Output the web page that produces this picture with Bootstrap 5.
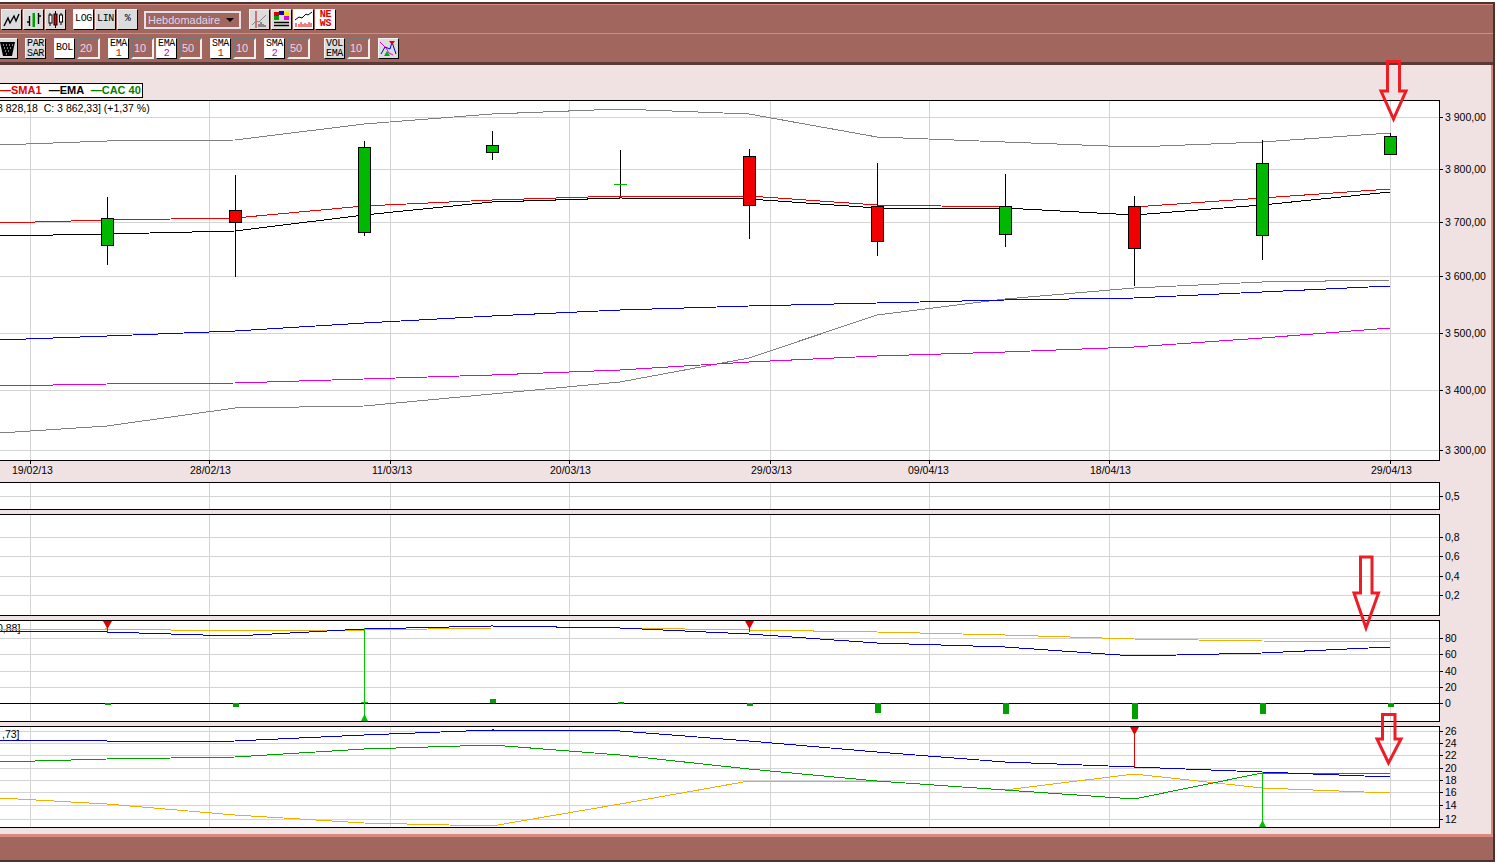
<!DOCTYPE html>
<html lang="fr">
<head>
    <meta charset="UTF-8">
    <title>Graphique CAC 40</title>
    <link href="https://cdn.jsdelivr.net/npm/bootstrap@5.3.0/dist/css/bootstrap.min.css" rel="stylesheet">
    <style>
        html, body { height: 863px; overflow: hidden; background: #fff; }
        body { font-family: "Liberation Sans", Arial, sans-serif; font-size: 11px; color: #000; }
        .app-frame { width: 1495px; height: 860px; margin-top: 2px; background: #a1665e; border: solid #4a3431; border-width: 2px 2px 2px 0; overflow: hidden; }
        .tool-row { flex: none; height: 30px; padding-top: 5px; border-top: 1px solid #d98a7e; border-bottom: 1px solid #d98a7e; }
        .tool-row2 { flex: none; height: 31px; padding-top: 4px; border-bottom: 3px solid #5a3a36; }
        .tb-btn { flex: none; width: 21px; height: 21px; background: #dcdcdc; border: 1px solid; border-color: #f4f4f4 #000 #000 #f4f4f4; font-family: "Liberation Mono", monospace; font-size: 10px; letter-spacing: -.3px; line-height: 10px; text-align: center; padding: 0; overflow: hidden; }
        .tool-row .tb-btn { margin-top: -1px; }
        .tb-btn.on { background: #fff; }
        .tb-btn svg { display: block; width: 19px; height: 19px; }
        .tb-wide { padding-top: 4px; }
        .tb-two { line-height: 9.5px; }
        .num1 { color: #e00000; display: block; }
        .num2 { color: #c000c0; display: block; }
        .red-news { color: #e00000; font-weight: bold; line-height: 9px; }
        .tb-num { flex: none; width: 23px; height: 21px; border: 2px solid; border-color: #777 #eee #eee #777; color: #e8d8e8; font-size: 11px; line-height: 17px; padding-left: 1px; }
        .tb-sel { flex: none; width: 97px; height: 18px; margin-top: 1px; background: #a1665e; border: 2px solid #e8e0e8; color: #d8d8f0; font-size: 11px; line-height: 14px; padding-left: 2px; }
        .tb-sel b { flex: none; width: 19px; height: 14px; margin-left: auto; }
        .tb-sel i { display: block; width: 0; height: 0; margin: 5px auto 0; border: solid transparent; border-width: 4px 4px 0; border-top-color: #000; }
        .gap8 { margin-left: 8px; }
        .gap7 { margin-left: 7px; }
        .gap6 { margin-left: 6px; }
        .gap2 { margin-left: 2px; }
        .gap1 { margin-left: 1px; }
        .gap14 { margin-left: 14px; }
        .shift-l { margin-left: -3px; }
        .chart-area { position: relative; flex: none; width: 1493px; height: 772px; background: #f0e2e3; border-right: 2px solid #d98a7e; border-bottom: 3px solid #d98a7e; }
        .legend-box { width: 144px; height: 15px; margin: 18px 0 2px -1px; background: #fff; border: 1px solid #000; font-weight: bold; font-size: 11px; line-height: 13px; white-space: nowrap; }
        .leg-r { color: #e00000; }
        .leg-k { color: #000; }
        .leg-g { color: #008000; }
        .pane { display: block; overflow: hidden; }
        .pane text { font-family: "Liberation Sans", Arial, sans-serif; font-size: 10.5px; fill: #000; }
        .plot { fill: #fff; stroke: #000; stroke-width: 1; shape-rendering: crispEdges; }
        .grid { stroke: #d4d4d4; fill: none; shape-rendering: crispEdges; }
        .tick { stroke: #000; fill: none; shape-rendering: crispEdges; }
        .ln { fill: none; stroke-width: 1; shape-rendering: crispEdges; }
        .wick { stroke: #000; shape-rendering: crispEdges; }
        .doji { stroke: #00b800; shape-rendering: crispEdges; }
        .up { fill: #00b800; stroke: #000; shape-rendering: crispEdges; }
        .dn { fill: #f00000; stroke: #000; shape-rendering: crispEdges; }
        .bar-g { fill: #00a000; shape-rendering: crispEdges; }
        .arrows { position: absolute; left: 0; top: -65px; width: 1491px; height: 863px; pointer-events: none; }
        .arrows polygon { fill: none; stroke: #ee1c25; stroke-width: 3; stroke-linejoin: miter; }
    </style>
</head>
<body>
<div class="app-frame d-flex flex-column">
    <div class="tool-row d-flex">
        <div class="tb-btn gap1"><svg viewBox="0 0 19 19"><path d="M2 16L6 8 8 13 12 6 14 11 17 4" fill="none" stroke="#000" stroke-width="1.400"/></svg></div>
        <div class="tb-btn gap1"><svg viewBox="0 0 19 19"><path d="M5.500 6V16M3 12H5.500M14.500 3V14M14.500 6H17" fill="none" stroke="#000" stroke-width="1.400"/><path d="M8.500 3H11V17H8.500z" fill="#00a000"/></svg></div>
        <div class="tb-btn gap1"><svg viewBox="0 0 19 19"><path d="M4 3V16M9.500 1V18M15 3V15" stroke="#000"/><rect x="3" y="5" width="3" height="8" fill="#fff" stroke="#000"/><rect x="8" y="4" width="3" height="11" fill="#e00000" stroke="#000"/><rect x="13.500" y="5" width="3" height="7" fill="#fff" stroke="#000"/></svg></div>
        <div class="tb-btn on tb-wide gap7">LOG</div>
        <div class="tb-btn tb-wide gap1">LIN</div>
        <div class="tb-btn tb-wide gap1">%</div>
        <div class="tb-sel gap6 d-flex"><span>Hebdomadaire</span><b><i></i></b></div>
        <div class="tb-btn gap8"><svg viewBox="0 0 19 19"><path d="M6 1V18" stroke="#d00000"/><path d="M2 15L6 11 9 12 16 5" fill="none" stroke="#888"/><path d="M9 17V14M11 17V12M13 17V14M15 17V15" stroke="#333"/></svg></div>
        <div class="tb-btn gap1"><svg viewBox="0 0 19 19"><rect x="2" y="2" width="5" height="4" fill="#d00000"/><rect x="7" y="1" width="5" height="4" fill="#0000e0"/><rect x="12" y="2" width="5" height="4" fill="#e8e800"/><rect x="2" y="6" width="5" height="4" fill="#00a000"/><rect x="12" y="6" width="5" height="4" fill="#e000e0"/><path d="M2 12.500H17M2 15.500H17" stroke="#000" stroke-width="1.500"/></svg></div>
        <div class="tb-btn on gap1"><svg viewBox="0 0 19 19"><path d="M1 10L5 7 8 8 12 4 14 5 18 2" fill="none" stroke="#000"/><path d="M2 17V13M5 17V14M7 17V12M9 17V14M11 17V13M13 17V14M15 17V12M17 17V13" stroke="#e00000"/></svg></div>
        <div class="tb-btn on red-news gap1">NE<br>WS</div>
    </div>
    <div class="tool-row2 d-flex">
        <div class="tb-btn shift-l"><svg viewBox="0 0 19 19"><path d="M2 3H17L14 17H5z" fill="#000"/><path d="M5 6H6M8 6H9M11 6H12M14 6H15M6 9H7M9 9H10M12 9H13M7 12H8M10 12H11M8 15H9" stroke="#fff"/></svg></div>
        <div class="tb-btn tb-two gap7">PAR<br>SAR</div>
        <div class="tb-btn on tb-wide gap8">BOL</div>
        <div class="tb-num gap2">20</div>
        <div class="tb-btn on tb-two gap8">EMA<span class="num1">1</span></div>
        <div class="tb-num gap2">10</div>
        <div class="tb-btn on tb-two gap2">EMA<span class="num2">2</span></div>
        <div class="tb-num gap2">50</div>
        <div class="tb-btn on tb-two gap8">SMA<span class="num1">1</span></div>
        <div class="tb-num gap2">10</div>
        <div class="tb-btn on tb-two gap8">SMA<span class="num2">2</span></div>
        <div class="tb-num gap2">50</div>
        <div class="tb-btn tb-two gap14">VOL<br>EMA</div>
        <div class="tb-num gap2">10</div>
        <div class="tb-btn gap8"><svg viewBox="0 0 19 19"><path d="M1 3L7 9 10 14 14 16" fill="none" stroke="#e000e0"/><path d="M2 15L6 8 11 10 13 3 17 15" fill="none" stroke="#0000e0"/><path d="M10 2H16L13 6z" fill="#e00000"/><path d="M5 17H11L8 12z" fill="#00b000"/></svg></div>
    </div>

    <div class="chart-area">
        <div class="legend-box"><span class="leg-r">—SMA1</span> <span class="leg-k ms-1">—EMA</span> <span class="leg-g ms-1">—CAC 40</span></div>

        <!-- cours -->
        <svg class="pane" width="1491" height="382" viewBox="0 100 1491 382">
            <rect class="plot" x="-5" y="100.500" width="1444" height="360"/>
            <path class="grid" d="M0 117.500H1439M0 169.500H1439M0 222.500H1439M0 276.500H1439M0 333.500H1439M0 390.500H1439M0 450.500H1439M30.500 101V460M209.500 101V460M390.500 101V460M569.500 101V460M770.500 101V460M929.500 101V460M1109.500 101V460M1390.500 101V460"/>
            <path class="tick" d="M1439 117.500H1443M1439 169.500H1443M1439 222.500H1443M1439 276.500H1443M1439 333.500H1443M1439 390.500H1443M1439 450.500H1443M30.500 460V464M209.500 460V464M390.500 460V464M569.500 460V464M770.500 460V464M929.500 460V464M1109.500 460V464M1390.500 460V464"/>
            <polyline class="ln" stroke="#808080" points="0,145 107,141 235,140 364,124 492,114 620,109 749,114 877,137 1005,142 1134,147 1262,142 1390,133"/>
            <polyline class="ln" stroke="#808080" points="0,433 107,426 235,408 364,406 492,394 620,382 749,358 877,315 1005,299 1134,288 1262,282 1390,280"/>
            <polyline class="ln" stroke="#0000e0" points="0,340 107,336 235,331 364,323 492,316 620,310 749,306 877,303 1005,300 1134,298 1262,292 1390,286"/>
            <polyline class="ln" stroke="#e000e0" points="0,386 107,384 235,383 364,379 492,375 620,370 749,362 877,356 1005,352 1134,347 1262,338 1390,328"/>
            <polyline class="ln" stroke="#f00000" points="0,223 107,220 235,218 364,206 492,200 620,196 749,196 877,205 1005,207 1134,207 1262,198 1390,189"/>
            <polyline class="ln" stroke="#000" points="0,236 107,234 235,231 364,215 492,202 620,198 749,199 877,208 1005,208 1134,215 1262,205 1390,192"/>
            <path class="wick" d="M107.500 197V265M235.500 175V277M364.500 141V236M492.500 131V160M620.500 150V196M749.500 149V239M877.500 163V256M1005.500 174V247M1134.500 196V286M1262.500 140V260M1390.500 133V155"/>
            <rect class="up" x="101.500" y="218.500" width="12" height="27"/>
            <rect class="dn" x="229.500" y="210.500" width="12" height="12"/>
            <rect class="up" x="358.500" y="147.500" width="12" height="85"/>
            <rect class="up" x="486.500" y="145.500" width="12" height="7"/>
            <path class="doji" d="M614 184.500H627"/>
            <rect class="dn" x="743.500" y="156.500" width="12" height="49"/>
            <rect class="dn" x="871.500" y="206.500" width="12" height="35"/>
            <rect class="up" x="999.500" y="206.500" width="12" height="28"/>
            <rect class="dn" x="1128.500" y="206.500" width="12" height="42"/>
            <rect class="up" x="1256.500" y="163.500" width="12" height="72"/>
            <rect class="up" x="1384.500" y="136.500" width="12" height="18"/>
            <text x="-3" y="112">3 828,18&#160;&#160;C: 3 862,33] (+1,37 %)</text>
            <text x="1445" y="121">3 900,00</text>
            <text x="1445" y="173">3 800,00</text>
            <text x="1445" y="226">3 700,00</text>
            <text x="1445" y="280">3 600,00</text>
            <text x="1445" y="337">3 500,00</text>
            <text x="1445" y="394">3 400,00</text>
            <text x="1445" y="454">3 300,00</text>
            <text x="12" y="474">19/02/13</text>
            <text x="190" y="474">28/02/13</text>
            <text x="372" y="474">11/03/13</text>
            <text x="550" y="474">20/03/13</text>
            <text x="751" y="474">29/03/13</text>
            <text x="908" y="474">09/04/13</text>
            <text x="1090" y="474">18/04/13</text>
            <text x="1371" y="474">29/04/13</text>
        </svg>

        <!-- volatilite -->
        <svg class="pane" width="1491" height="32" viewBox="0 482 1491 32">
            <rect class="plot" x="-5" y="482.500" width="1444" height="27"/>
            <path class="grid" d="M0 496.500H1439M30.500 483V509M209.500 483V509M390.500 483V509M569.500 483V509M770.500 483V509M929.500 483V509M1109.500 483V509M1390.500 483V509"/>
            <path class="tick" d="M1439 496.500H1443"/>
            <text x="1445" y="500">0,5</text>
        </svg>

        <!-- oscillateur -->
        <svg class="pane" width="1491" height="106" viewBox="0 514 1491 106">
            <rect class="plot" x="-5" y="514.500" width="1444" height="101"/>
            <path class="grid" d="M0 537.500H1439M0 556.500H1439M0 576.500H1439M0 595.500H1439M30.500 515V615M209.500 515V615M390.500 515V615M569.500 515V615M770.500 515V615M929.500 515V615M1109.500 515V615M1390.500 515V615"/>
            <path class="tick" d="M1439 537.500H1443M1439 556.500H1443M1439 576.500H1443M1439 595.500H1443"/>
            <text x="1445" y="541">0,8</text>
            <text x="1445" y="560">0,6</text>
            <text x="1445" y="580">0,4</text>
            <text x="1445" y="599">0,2</text>
        </svg>

        <!-- stochastique -->
        <svg class="pane" width="1491" height="106" viewBox="0 620 1491 106">
            <rect class="plot" x="-5" y="620.500" width="1444" height="101"/>
            <path class="grid" d="M0 638.500H1439M0 654.500H1439M0 671.500H1439M0 687.500H1439M30.500 621V721M209.500 621V721M390.500 621V721M569.500 621V721M770.500 621V721M929.500 621V721M1109.500 621V721M1390.500 621V721"/>
            <path class="tick" d="M0 703.500H1443M1439 638.500H1443M1439 654.500H1443M1439 671.500H1443M1439 687.500H1443"/>
            <text x="-3" y="632">0,88]</text>
            <rect class="bar-g" x="105" y="703" width="6" height="2"/>
            <rect class="bar-g" x="233" y="703" width="6" height="4"/>
            <rect class="bar-g" x="490" y="699" width="6" height="4"/>
            <rect class="bar-g" x="618" y="702" width="6" height="2"/>
            <rect class="bar-g" x="747" y="703" width="6" height="3"/>
            <rect class="bar-g" x="875" y="703" width="6" height="10"/>
            <rect class="bar-g" x="1003" y="703" width="6" height="11"/>
            <rect class="bar-g" x="1132" y="703" width="6" height="16"/>
            <rect class="bar-g" x="1260" y="703" width="6" height="11"/>
            <rect class="bar-g" x="1388" y="703" width="6" height="4"/>
            <polyline class="ln" stroke="#f0b000" points="0,630 107,629 235,631 364,630 492,628 620,628 749,630 877,632 1005,635 1134,639 1262,641 1390,642"/>
            <polyline class="ln" stroke="#0000d0" points="0,631 107,632 235,636 364,629 492,626 620,628 749,634 877,643 1005,647 1134,656 1262,653 1390,647"/>
            <path d="M107.500 621V632M749.500 621V632" stroke="#e00000" shape-rendering="crispEdges"/>
            <path d="M103 621H112L107.500 629zM745 621H754L749.500 629z" fill="#e00000"/>
            <path d="M364.500 628V721M361 702.500H368" stroke="#00c800" shape-rendering="crispEdges"/>
            <path d="M361 721H368L364.500 714z" fill="#00c000"/>
            <text x="1445" y="642">80</text>
            <text x="1445" y="658">60</text>
            <text x="1445" y="675">40</text>
            <text x="1445" y="691">20</text>
            <text x="1445" y="707">0</text>
        </svg>

        <!-- adx -->
        <svg class="pane" width="1491" height="102" viewBox="0 726 1491 102">
            <rect class="plot" x="-5" y="726.500" width="1444" height="101"/>
            <path class="grid" d="M0 731.500H1439M0 743.500H1439M0 755.500H1439M0 768.500H1439M0 780.500H1439M0 792.500H1439M0 805.500H1439M0 819.500H1439M30.500 727V827M209.500 727V827M390.500 727V827M569.500 727V827M770.500 727V827M929.500 727V827M1109.500 727V827M1390.500 727V827"/>
            <path class="tick" d="M1439 731.500H1443M1439 743.500H1443M1439 755.500H1443M1439 768.500H1443M1439 780.500H1443M1439 792.500H1443M1439 805.500H1443M1439 819.500H1443"/>
            <text x="2" y="738">,73]</text>
            <polyline class="ln" stroke="#f0b000" points="0,798 107,804 235,815 364,823 492,826 620,804 749,781 877,781 1005,790 1134,774 1262,788 1390,793"/>
            <polyline class="ln" stroke="#00a000" points="0,762 107,759 235,757 364,749 492,745 620,755 749,769 877,781 1005,790 1134,799 1262,773 1390,773"/>
            <polyline class="ln" stroke="#0000d0" points="0,740 107,741 173,742 235,741 364,735 492,730 620,731 749,741 877,752 1005,762 1134,767 1262,772 1390,777"/>
            <path d="M1134.500 727V767" stroke="#e00000" shape-rendering="crispEdges"/>
            <path d="M1130 727H1139L1134.500 735z" fill="#e00000"/>
            <path d="M1262.500 772V827" stroke="#00c800" shape-rendering="crispEdges"/>
            <path d="M1259 827H1266L1262.500 820z" fill="#00c000"/>
            <text x="1445" y="735">26</text>
            <text x="1445" y="747">24</text>
            <text x="1445" y="759">22</text>
            <text x="1445" y="772">20</text>
            <text x="1445" y="784">18</text>
            <text x="1445" y="796">16</text>
            <text x="1445" y="809">14</text>
            <text x="1445" y="823">12</text>
        </svg>

        <!-- fleches -->
        <svg class="arrows" viewBox="0 0 1491 863">
            <polygon points="1387.500,61.500 1399.500,61.500 1399.500,91 1406,91 1393.500,119 1381,91 1387.500,91"/>
            <polygon points="1360.500,557 1372,557 1372,593 1378.500,593 1366,628 1354,593 1360.500,593"/>
            <polygon points="1382.500,714.500 1395,714.500 1395,739 1401,739 1388.500,763 1377,739 1382.500,739"/>
        </svg>
    </div>
</div>
<script src="https://cdn.jsdelivr.net/npm/bootstrap@5.3.0/dist/js/bootstrap.bundle.min.js"></script>
</body>
</html>
